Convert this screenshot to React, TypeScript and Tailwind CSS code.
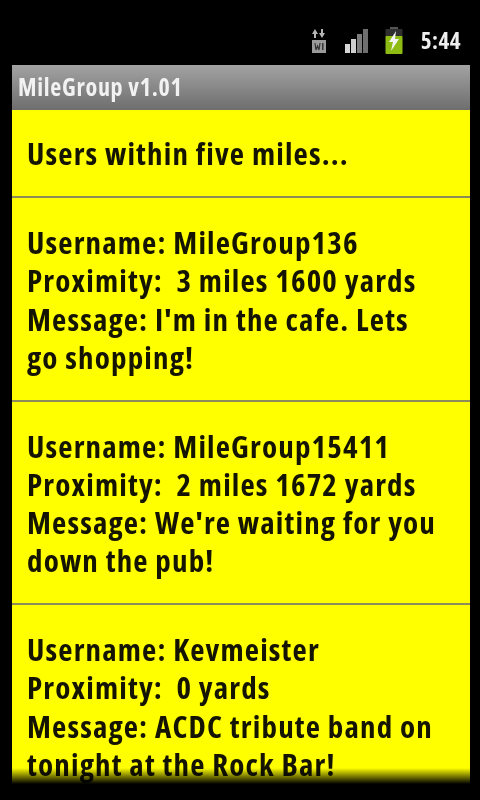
const font = { fontFamily: '"Open Sans", "Noto Sans", sans-serif', fontStretch: "75%" };

const users = [
  { name: "MileGroup136", prox: "3 miles 1600 yards", msg: ["Message: I'm in the cafe. Lets", "go shopping!"] },
  { name: "MileGroup15411", prox: "2 miles 1672 yards", msg: ["Message: We're waiting for you", "down the pub!"] },
  { name: "Kevmeister", prox: "0 yards", msg: ["Message: ACDC tribute band on", "tonight at the Rock Bar!"] },
];

function TransferIcon() {
  return (
    <svg width="16" height="26" viewBox="0 0 16 26">
      <path d="M4 1 L1 6 H3 V10 H5 V6 H7 Z" fill="#b5b5b5" />
      <path d="M11 10 L8 5 H10 V1 H12 V5 H14 Z" fill="#b5b5b5" />
      <rect x="1" y="12" width="14" height="13" fill="#9a9a9a" />
      <path d="M4 15 L5 22 L6.5 18 L8 22 L9 15" stroke="#333" strokeWidth="1.2" fill="none" />
      <rect x="11" y="15" width="1.5" height="7" fill="#333" />
    </svg>
  );
}

function SignalIcon() {
  return (
    <svg width="24" height="26" viewBox="0 0 24 26">
      <rect x="1" y="16" width="5" height="9" fill="#d6d6d6" />
      <rect x="7" y="11" width="5" height="14" fill="#d0d0d0" />
      <rect x="13" y="6" width="5" height="19" fill="#7d7d7d" />
      <rect x="19" y="1" width="5" height="24" fill="#6f6f6f" />
    </svg>
  );
}

function BatteryIcon() {
  return (
    <svg width="18" height="28" viewBox="0 0 18 28">
      <rect x="5" y="0" width="8" height="3" fill="#555" />
      <rect x="0.5" y="2" width="17" height="8" fill="#2f2f2f" />
      <rect x="0.5" y="9" width="17" height="18" rx="1" fill="#8fbc12" />
      <path d="M11 4 L4 15 H8 L6 24 L14 12 H10 Z" fill="#f4f4f4" />
    </svg>
  );
}

export default function App() {
  return (
    <div className="h-[800px] w-[480px] overflow-hidden bg-black">
      <div className="relative h-[800px] w-[480px] overflow-hidden bg-black blur-[0.6px]" style={font}>
        <div className="flex h-[65px] items-center justify-end gap-[17px] pr-[19px] pt-[16px]">
          <TransferIcon />
          <SignalIcon />
          <BatteryIcon />
          <span className="ml-[1px] text-[23px] font-bold tracking-[0.5px] text-[#eeeeee]">5:44</span>
        </div>
        <div className="ml-3 mr-[10px]">
          <div className="flex h-[45px] items-center bg-gradient-to-b from-[#a3a3a3] to-[#6e6e6e] pb-[2px] pl-[6px] text-[24px] font-bold tracking-[0.7px] text-[#f2f2f2]">
            MileGroup v1.01
          </div>
          <div className="bg-[#ffff00] text-[31px] font-bold leading-[38.3px] tracking-[1.15px] text-[#141400]">
            <div className="flex h-[88px] items-center border-b-2 border-[#8c8c5a] pl-[15px]">Users within five miles...</div>
            {users.map((u) => (
              <div key={u.name} className="h-[203.5px] border-b-2 border-[#8c8c5a] pl-[15px] pt-[25px]">
                <div>Username: {u.name}</div>
                <div className="whitespace-pre">Proximity:  {u.prox}</div>
                {u.msg.map((m) => (
                  <div key={m}>{m}</div>
                ))}
              </div>
            ))}
          </div>
        </div>
        <div className="absolute bottom-0 left-0 right-0 h-[32px] bg-gradient-to-b from-transparent via-black to-black" />
      </div>
    </div>
  );
}
